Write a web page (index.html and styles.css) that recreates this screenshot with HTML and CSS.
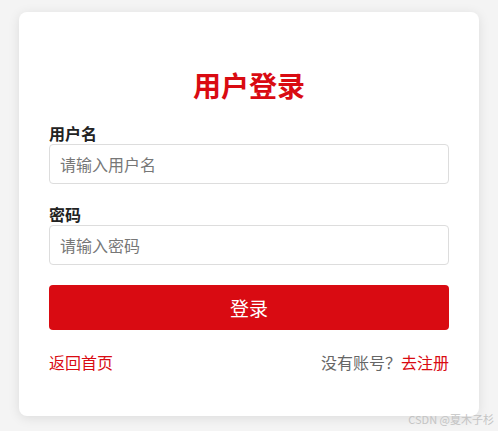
FILE: index.html
```html
<!DOCTYPE html>
<html lang="zh-CN">
<head>
<meta charset="utf-8">
<title>用户登录</title>
<link rel="stylesheet" href="styles.css">
</head>
<body>
<div class="page">
  <div class="card">
    <h2 class="title">用户登录</h2>
    <form class="form">
      <div class="field">
        <label class="label" for="u">用户名</label>
        <input class="input" id="u" type="text" placeholder="请输入用户名">
      </div>
      <div class="field">
        <label class="label" for="p">密码</label>
        <input class="input" id="p" type="password" placeholder="请输入密码">
      </div>
      <button class="btn" type="button">登录</button>
    </form>
    <div class="links">
      <a class="link" href="#">返回首页</a>
      <span class="hint">没有账号？<a class="link" href="#">去注册</a></span>
    </div>
  </div>
  <div class="watermark">CSDN @夏木子杉</div>
</div>
</body>
</html>
```
FILE: styles.css
```css
* { box-sizing: border-box; }
html, body { margin: 0; padding: 0; }
body {
  background: #f4f4f4;
  font-family: "Noto Sans CJK SC", "Noto Sans", sans-serif;
  color: #333;
}
.page {
  position: relative;
  height: 431px;
  padding: 12px 19px 0;
}
.card {
  background: #fff;
  border-radius: 8px;
  box-shadow: 0 2px 12px rgba(0, 0, 0, 0.1);
  padding: 53px 30px 47px;
  height: 404px;
}
.title {
  margin: 0;
  text-align: center;
  color: #d90b12;
  font-size: 28px;
  line-height: 40px;
  font-weight: 700;
}
.form {
  margin-top: 18px;
  display: flex;
  flex-direction: column;
  gap: 20px;
}
.field {
  display: flex;
  flex-direction: column;
  gap: 1px;
}
.label {
  font-size: 16px;
  line-height: 20px;
  font-weight: 700;
  color: #222;
}
.input {
  height: 40px;
  border: 1px solid #ddd;
  border-radius: 4px;
  padding: 0 10px;
  font-family: inherit;
  font-size: 16px;
  color: #333;
  outline: none;
}
.input::placeholder { color: #777; }
.btn {
  height: 45px;
  border: 0;
  border-radius: 4px;
  background: #d90b12;
  color: #fff;
  font-family: inherit;
  font-size: 19px;
}
.links {
  margin-top: 22px;
  display: flex;
  justify-content: space-between;
  font-size: 16px;
  line-height: 20px;
}
.link { color: #d90b12; text-decoration: none; }
.hint { color: #666; }
.watermark {
  position: absolute;
  right: 4px;
  bottom: 4px;
  font-size: 11px;
  color: #c4c4c4;
  font-family: "Noto Sans CJK SC", sans-serif;
}
```
